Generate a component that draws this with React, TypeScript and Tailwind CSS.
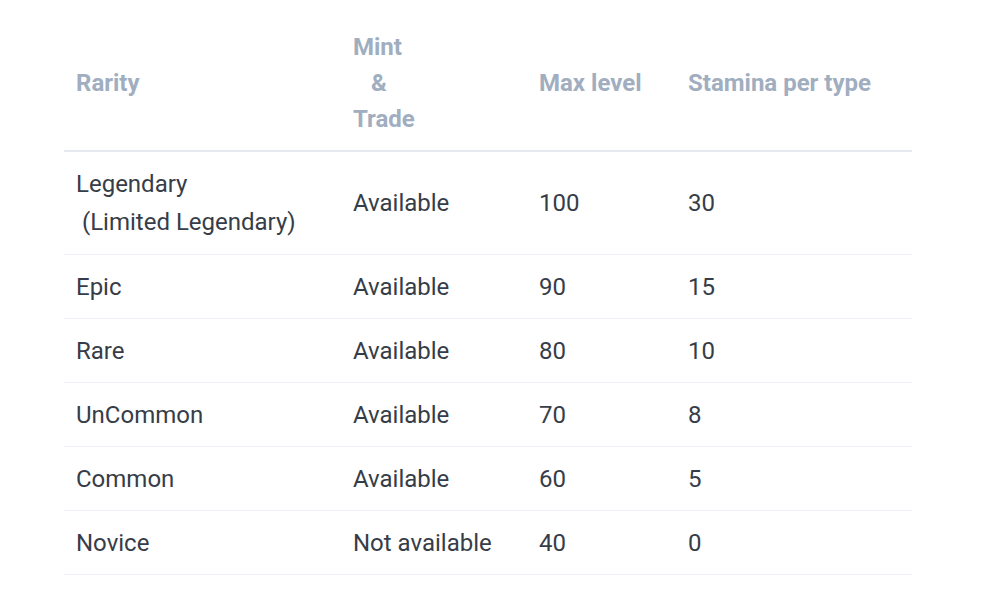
import React from "react";

const rows: [React.ReactNode, string, string, string][] = [
  [
    <>
      Legendary
      <br />
      {"\u00a0(Limited Legendary)"}
    </>,
    "Available",
    "100",
    "30",
  ],
  ["Epic", "Available", "90", "15"],
  ["Rare", "Available", "80", "10"],
  ["UnCommon", "Available", "70", "8"],
  ["Common", "Available", "60", "5"],
  ["Novice", "Not available", "40", "0"],
];

export default function App() {
  const th =
    "px-[12px] pt-[11px] pb-[13px] font-bold leading-[36px] text-[#a0aec0] align-middle";
  return (
    <div
      className="w-[990px] h-[607px] bg-white pt-[18px] pl-[64px]"
      style={{ fontFamily: "Roboto, 'Liberation Sans', sans-serif" }}
    >
      <table className="w-[848px] border-collapse text-[24px] text-left">
        <colgroup>
          <col className="w-[277px]" />
          <col className="w-[186px]" />
          <col className="w-[149px]" />
          <col className="w-[236px]" />
        </colgroup>
        <thead>
          <tr className="border-b-2 border-[#e6e9ef]">
            <th className={th}>Rarity</th>
            <th className={th}>
              Mint
              <br />
              <span className="pl-[18px]">&amp;</span>
              <br />
              Trade
            </th>
            <th className={th}>Max level</th>
            <th className={th}>Stamina per type</th>
          </tr>
        </thead>
        <tbody>
          {rows.map((r, i) => {
            const td =
              i === 0
                ? "px-[12px] pt-[13px] pb-[13px] leading-[38px] text-[#363d48] align-middle"
                : "px-[12px] pt-[13px] pb-[12px] leading-[38px] text-[#363d48] align-middle";
            return (
              <tr key={i} className="border-b border-[#edf0f4]">
                <td className={td}>{r[0]}</td>
                <td className={td}>{r[1]}</td>
                <td className={td}>{r[2]}</td>
                <td className={td}>{r[3]}</td>
              </tr>
            );
          })}
        </tbody>
      </table>
    </div>
  );
}
